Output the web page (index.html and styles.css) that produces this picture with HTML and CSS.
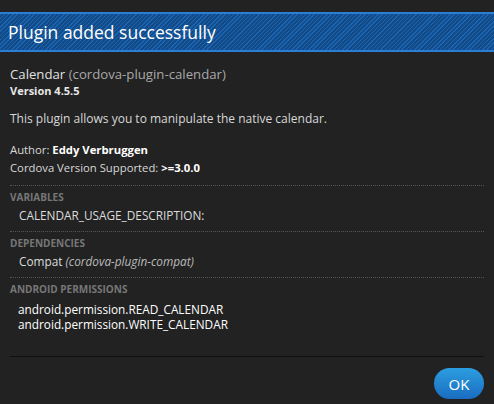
FILE: index.html
```html
<!DOCTYPE html>
<html lang="en">
<head>
    <meta charset="UTF-8">
    <title>Plugin added</title>
    <link rel="stylesheet" href="styles.css">
</head>
<body>
    <div class="dialog">
        <div class="dialog-title">Plugin added successfully</div>
        <div class="dialog-body">
            <div class="plugin-name">Calendar <span class="plugin-id">(cordova-plugin-calendar)</span></div>
            <div class="plugin-version">Version 4.5.5</div>
            <p class="plugin-desc">This plugin allows you to manipulate the native calendar.</p>
            <div class="meta">Author: <b>Eddy Verbruggen</b></div>
            <div class="meta">Cordova Version Supported: <b>&gt;=3.0.0</b></div>

            <div class="section">
                <div class="section-label">VARIABLES</div>
                <div class="section-item">CALENDAR_USAGE_DESCRIPTION:</div>
            </div>
            <div class="section">
                <div class="section-label">DEPENDENCIES</div>
                <div class="section-item">Compat <i>(cordova-plugin-compat)</i></div>
            </div>
            <div class="section">
                <div class="section-label">ANDROID PERMISSIONS</div>
                <div class="section-item perms">
                    <div>android.permission.READ_CALENDAR</div>
                    <div>android.permission.WRITE_CALENDAR</div>
                </div>
            </div>
        </div>
        <div class="dialog-footer">
            <button class="ok-btn">OK</button>
        </div>
    </div>
</body>
</html>
```

FILE: styles.css
```css
body {
    margin: 0;
    padding: 0;
    background-color: #222222;
    font-family: "Open Sans", sans-serif;
    color: #d8d8d8;
}
.dialog {
    padding-top: 12px;
}
.dialog-title {
    height: 36px;
    line-height: 37px;
    padding-left: 8px;
    font-size: 17.5px;
    color: #ffffff;
    border-top: 2px solid #2a7fd4;
    border-bottom: 2px solid #2a7fd4;
    background-color: #17579c;
    background-image: repeating-linear-gradient(135deg, #1b64b2 0, #1b64b2 1px, #134b88 1px, #134b88 3px);
}
.dialog-body {
    margin: 0 10px;
    padding-top: 12px;
    padding-bottom: 24px;
    border-bottom: 1px solid #111111;
}
.plugin-name {
    font-size: 13.2px;
    line-height: 20px;
    color: #e0e0e0;
}
.plugin-id {
    color: #a8a8a8;
}
.plugin-version {
    font-size: 11px;
    font-weight: bold;
    line-height: 14px;
    color: #e8e8e8;
}
.plugin-desc {
    font-size: 12px;
    margin: 13px 0 15px;
    line-height: 15px;
}
.meta {
    font-size: 11.3px;
    line-height: 18px;
}
.meta b {
    color: #ffffff;
}
.section {
    border-top: 1px dotted #555555;
    margin-top: 8px;
    padding-top: 4px;
}
.section-label {
    font-size: 10px;
    font-weight: bold;
    color: #777777;
    line-height: 14px;
}
.section-item {
    font-size: 11.8px;
    padding-left: 9px;
    line-height: 16px;
    margin-top: 3px;
    color: #dcdcdc;
}
.section-item i {
    color: #bbbbbb;
}
.perms {
    line-height: 15px;
    margin-top: 6px;
    padding-left: 8px;
    color: #ffffff;
}
.dialog-footer {
    display: flex;
    justify-content: flex-end;
    padding: 11px 10px 0;
}
.ok-btn {
    width: 50px;
    height: 31px;
    border: none;
    border-radius: 16px;
    background: linear-gradient(#2c9ee0, #1a6cc0);
    color: #ffffff;
    font-family: "Open Sans", sans-serif;
    font-size: 15px;
    cursor: pointer;
}
```
